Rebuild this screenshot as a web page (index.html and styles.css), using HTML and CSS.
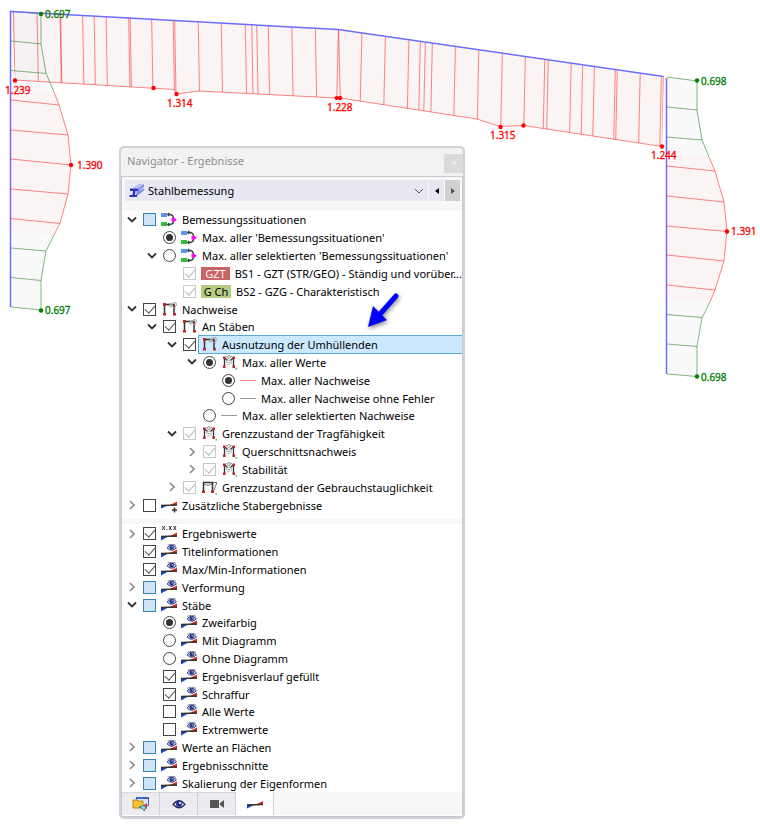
FILE: index.html
```html
<!DOCTYPE html>
<html lang="de">
<head>
<meta charset="utf-8">
<title>Navigator - Ergebnisse</title>
<link rel="stylesheet" href="styles.css">
</head>
<body>
<svg class="defs" aria-hidden="true">
  <symbol id="i-sit" viewBox="0 0 17 15">
    <path d="M6 2.500h3q3.500 .5 3.500 4M6 12.500h3q3.500-.5 3.500-3.500" fill="none" stroke="#444" stroke-width="1.500"/>
    <path d="M7 .5v4l3-2zM7 10.500v4l3-2z" fill="#444"/>
    <path d="M0 1h6v4H0z" fill="#5b93ee"/><path d="M0 10h6v4H0z" fill="#2fbd3a"/>
    <path d="M10.500 6h3l2.500 1.800-2.500 1.700h-3z" fill="#f0f"/>
  </symbol>
  <symbol id="i-frame" viewBox="0 0 17 15">
    <path d="M3.500 12V2.500h9.500V12" fill="none" stroke="#333" stroke-width="1.500"/>
    <g fill="none" stroke="#9aa1a6"><circle cx="10" cy="3.500" r="1.500"/><circle cx="13.500" cy="2.500" r="2"/><path d="M8 1l2 2M12 5l3 1"/></g>
    <path d="M2 1h3v3H2zM2 11h3v2.500H2zM12 11h3v2.500h-3zM12 3h2v2h-2z" fill="#c0272d"/>
  </symbol>
  <symbol id="i-gear" viewBox="0 0 17 15">
    <path d="M3.500 12V2.500M12.500 2.500V12M3.500 2.500l3 3M12.500 2.500l-3 3" fill="none" stroke="#333" stroke-width="1.300"/>
    <g fill="none" stroke="#9a9da0"><circle cx="8" cy="2" r="1.500"/><circle cx="8" cy="7.500" r="2.300" stroke-dasharray="2 1"/><path d="M7 7.500h2M5 1l1 1M10 2l1-1"/></g>
    <path d="M2 1.500h2.500V4H2zM11.500 1.500H14V4h-2.500zM2 10.500h2.500V13H2zM11.500 10.500H14V13h-2.500z" fill="#c0272d"/>
    <path d="M14.500 13H16v1.500h-1.500z" fill="#3fbf3f"/>
  </symbol>
  <symbol id="i-sag" viewBox="0 0 17 15">
    <path d="M2.500 12V2.500h9V12" fill="none" stroke="#333" stroke-width="1.500"/>
    <path d="M3 4q4 3 8 0M12 2.500h4L12.500 11" fill="none" stroke="#777"/>
    <path d="M1 10.500h3V13H1zM10 10.500h3V13h-3z" fill="#c0272d"/><path d="M14.500 13H16v1.500h-1.500z" fill="#3fbf3f"/>
  </symbol>
  <symbol id="i-mem" viewBox="0 0 17 15">
    <path d="M0 9h8L0 13.500z" fill="#1747c4"/><path d="M8 9.500L16 5.500v4.500H8z" fill="#e22a12"/>
    <path d="M0 9.500L16 9" stroke="#333" stroke-width="1.500"/>
  </symbol>
  <symbol id="i-eye" viewBox="0 0 17 15">
    <use href="#i-mem"/>
    <path d="M6 3.800q4.700-5 9.400 0-4.700 5-9.400 0z" fill="#cfd3ee" stroke="#33406e"/><circle cx="10.700" cy="3.500" r="2.200" fill="#27348f"/><circle cx="11.300" cy="2.800" r=".6" fill="#fff"/>
    <path d="M6.500 1.200q4.200-2 8.400 0" fill="none" stroke="#77809c"/>
  </symbol>
  <symbol id="i-plus" viewBox="0 0 17 15">
    <path d="M0 7h8L0 10.500z" fill="#1747c4"/><path d="M8 7.500L16 3.500v4z" fill="#e22a12"/>
    <path d="M0 7.500L16 7M11 12h5M13.500 9.500v5" stroke="#333" stroke-width="1.500"/>
  </symbol>
  <symbol id="i-xxx" viewBox="0 0 17 15">
    <use href="#i-mem" y="1"/>
    <path d="M1 0l3 4M4 0L1 4M8 0l2.500 4M10.500 0L8 4M12.500 0l2.500 4M15 0l-2.500 4" fill="none" stroke="#333"/><path d="M5.500 3h1v1h-1z" fill="#333"/>
  </symbol>
  <symbol id="i-red" viewBox="0 0 17 15"><path d="M0 7.500h16" stroke="#f88"/></symbol>
  <symbol id="i-grey" viewBox="0 0 17 15"><path d="M0 7.500h16" stroke="#999"/></symbol>
  <symbol id="i-open" viewBox="0 0 16 16"><path d="M4 5.500L8 9.500 12 5.500" fill="none" stroke="#333" stroke-width="1.800"/></symbol>
  <symbol id="i-shut" viewBox="0 0 16 16"><path d="M6 4l4 4-4 4" fill="none" stroke="#888" stroke-width="1.600"/></symbol>
</svg>

<main class="stage">
  <svg class="diagram" viewBox="0 0 760 824" role="img" aria-label="Ausnutzungsverlauf am Rahmen">
    <defs>
      <clipPath id="beam"><path d="M11 11L338 29.500 664 77 662 146.500 523.500 125.500 500 126.500 477 119 340 98 336 98 199 91 177 94 174 89.500 15 80z"/></clipPath>
    </defs>
    <g class="fill-bad">
      <path d="M11 88l43 4 5 13 9 30 3 30-3 29-8 29-6 12-43-4z"/>
      <path d="M667 154l42 3 6 14 9 31 3 29-3 30-9 29-5 12-43-4z"/>
      <path d="M11 11L338 29.500 664 77 662 146.500 523.500 125.500 500 126.500 477 119 340 98 336 98 199 91 177 94 174 89.500 15 80z"/>
    </g>
    <g class="fill-ok">
      <path d="M11 11l30 3v30l5 29 8 19-43-4zM11 231l43 4-8 16-5 29v30l-30-3z"/>
      <path d="M667 77l30 4v29l5 30 7 17-42-3zM667 298l43 4-8 15-5 29v30l-30-2z"/>
    </g>
    <g class="line bad">
      <path clip-path="url(#beam)" d="M13.500 10l2 110M37 10l2 110M60 10l2 110M60.500 10l2 110M82.500 10l2 110M94 10l2 110M106 10l2 110M128.500 10l2 110M130 10l2 110M151.500 10l2 110M173 10l2 110M174.500 10l2 110M198 10l2 110M221 10l2 110M245 10l2 110M251.500 10l2 110M256.500 10l2 110M268 10l2 110M291.500 10l2 110M315 10l2 110M338.500 28l-2 80M338.500 28l2 80M362 30l-2 80M385.500 30l-2 90M409 35l-2 90M420.500 35l-2 90M425.500 35l-2 90M432.500 35l-2 95M455.500 40l-2 95M479 40l-2 95M502.500 50l-2 85M525.500 50l-2 90M545 50l-2 90M548.500 50l-2 90M571.500 50l-2 90M583 50l-2 95M594.500 60l-2 90M615.500 60l-2 90M617.500 60l-2 90M640.500 60l-2 90M661.500 70l-2 90M663.500 70l-1.500 90"/>
      <path d="M15 80l159 9.500 3 4.500 22-3 137 7h4l137 21 23 7.500 23.500-1 138.500 21"/>
      <path d="M54 92l5 13 9 30 3 30-3 29-8 29-6 12M11 100l48 5M11 130l57 5M11 159l60 6M11 189l57 5M11 218.500l49 5"/>
      <path d="M709 157l6 14 9 31 3 29-3 30-9 29-5 12M667 166l48 5M667 196l57 6M667 226l60 5.500M667 255l57 6M667 285l48 5"/>
    </g>
    <g class="line ok">
      <path d="M11 11l30 3v30l5 29 8 19M54 235l-8 16-5 29v30l-30-3M11 41l30 3M11 70.500l35 3M11 248l35 3M11 277.500l30 3"/>
      <path d="M667 77l30 4v29l5 30 7 17M710 302l-8 16-5 28.500v30l-30-2.500M667 107l30 3M667 137l35 3M667 314.500l35 3M667 344l30 2.500"/>
    </g>
    <path class="axis" d="M10.500 307V11.500L338 29.500 663.500 76.500M666.500 78v296"/>
    <path class="axis-tint" d="M10.500 88v143M666.500 154v144"/>
    <g class="dot-bad"><circle cx="15" cy="80.500" r="2.200"/><circle cx="153.500" cy="88" r="2.200"/><circle cx="176.500" cy="94" r="2.200"/><circle cx="336.500" cy="98" r="2"/><circle cx="340" cy="98" r="2.200"/><circle cx="500.500" cy="127" r="2.200"/><circle cx="523.500" cy="125.500" r="2.200"/><circle cx="662" cy="146.500" r="2.200"/><circle cx="71" cy="165" r="2.200"/><circle cx="727" cy="231.500" r="2.200"/></g>
    <g class="dot-ok"><circle cx="41" cy="14" r="2.200"/><circle cx="41" cy="310.500" r="2.200"/><circle cx="697" cy="80.500" r="2.200"/><circle cx="697" cy="376.500" r="2.200"/></g>
    <g class="num num-bad"><text x="5" y="94">1.239</text><text x="167" y="107">1.314</text><text x="327" y="111">1.228</text><text x="490" y="139">1.315</text><text x="651" y="159">1.244</text><text x="77" y="169">1.390</text><text x="731" y="235">1.391</text></g>
    <g class="num num-ok"><text x="45" y="18">0.697</text><text x="45" y="314">0.697</text><text x="701" y="85">0.698</text><text x="701" y="381">0.698</text></g>
  </svg>

  <section class="panel" aria-label="Navigator">
    <header class="title"><span>Navigator - Ergebnisse</span><button class="close" aria-label="Schließen"><svg viewBox="0 0 8 8"><path d="M2 2l4 4M6 2l-4 4"/></svg></button></header>
    <div class="body">
      <div class="bar">
        <div class="combo">
          <svg class="beam-icon" viewBox="0 0 16 14"><path d="M3 4.500L10 0h5L9 4.500z" fill="#b6bdf4"/><path d="M9 4.500L15 0v3L9.500 7 15 4.500v2L7 13l.5-6z" fill="#8790e6"/><path d="M1 4.500h8V7H6.500L6 11h2v2H.5v-2h3L4 7H1z" fill="#2b35b8"/></svg>
          <select aria-label="Bemessung"><option>Stahlbemessung</option></select>
          <svg class="chev" viewBox="0 0 10 6"><path d="M1 1l4 4 4-4"/></svg>
        </div>
        <button class="step" aria-label="Zurück"><svg viewBox="0 0 6 8"><path d="M5 1v6L1 4z"/></svg></button>
        <button class="step next" aria-label="Weiter"><svg viewBox="0 0 6 8"><path d="M1 1v6l4-3z"/></svg></button>
      </div>
      <ul class="tree tree-top">
        <li class="row"><button class="exp" aria-label="Zuklappen"><svg><use href="#i-open"/></svg></button><label><input type="checkbox" class="part"><svg><use href="#i-sit"/></svg><span>Bemessungssituationen</span></label></li>
        <li class="row l1"><i class="exp"></i><label><input type="radio" name="s" checked><svg><use href="#i-sit"/></svg><span>Max. aller 'Bemessungssituationen'</span></label></li>
        <li class="row l1"><button class="exp" aria-label="Zuklappen"><svg><use href="#i-open"/></svg></button><label><input type="radio" name="s"><svg><use href="#i-sit"/></svg><span>Max. aller selektierten 'Bemessungssituationen'</span></label></li>
        <li class="row l2"><i class="exp"></i><label><input type="checkbox" checked disabled><b class="tag tag-red">GZT</b><span>BS1 - GZT (STR/GEO) - Ständig und vorüber...</span></label></li>
        <li class="row l2"><i class="exp"></i><label><input type="checkbox" checked disabled><b class="tag tag-green">G Ch</b><span>BS2 - GZG - Charakteristisch</span></label></li>
        <li class="row"><button class="exp" aria-label="Zuklappen"><svg><use href="#i-open"/></svg></button><label><input type="checkbox" checked><svg><use href="#i-frame"/></svg><span>Nachweise</span></label></li>
        <li class="row l1"><button class="exp" aria-label="Zuklappen"><svg><use href="#i-open"/></svg></button><label><input type="checkbox" checked><svg><use href="#i-frame"/></svg><span>An Stäben</span></label></li>
        <li class="row l2 selected"><button class="exp" aria-label="Zuklappen"><svg><use href="#i-open"/></svg></button><label><input type="checkbox" checked><svg><use href="#i-frame"/></svg><span>Ausnutzung der Umhüllenden</span></label></li>
        <li class="row l3"><button class="exp" aria-label="Zuklappen"><svg><use href="#i-open"/></svg></button><label><input type="radio" name="w" checked><svg><use href="#i-gear"/></svg><span>Max. aller Werte</span></label></li>
        <li class="row l4"><i class="exp"></i><label><input type="radio" name="n" checked><svg><use href="#i-red"/></svg><span>Max. aller Nachweise</span></label></li>
        <li class="row l4"><i class="exp"></i><label><input type="radio" name="n"><svg><use href="#i-grey"/></svg><span>Max. aller Nachweise ohne Fehler</span></label></li>
        <li class="row l3"><i class="exp"></i><label><input type="radio" name="w"><svg><use href="#i-grey"/></svg><span>Max. aller selektierten Nachweise</span></label></li>
        <li class="row l2"><button class="exp" aria-label="Zuklappen"><svg><use href="#i-open"/></svg></button><label><input type="checkbox" checked disabled><svg><use href="#i-gear"/></svg><span>Grenzzustand der Tragfähigkeit</span></label></li>
        <li class="row l3"><button class="exp" aria-label="Aufklappen"><svg><use href="#i-shut"/></svg></button><label><input type="checkbox" checked disabled><svg><use href="#i-gear"/></svg><span>Querschnittsnachweis</span></label></li>
        <li class="row l3"><button class="exp" aria-label="Aufklappen"><svg><use href="#i-shut"/></svg></button><label><input type="checkbox" checked disabled><svg><use href="#i-gear"/></svg><span>Stabilität</span></label></li>
        <li class="row l2"><button class="exp" aria-label="Aufklappen"><svg><use href="#i-shut"/></svg></button><label><input type="checkbox" checked disabled><svg><use href="#i-sag"/></svg><span>Grenzzustand der Gebrauchstauglichkeit</span></label></li>
        <li class="row"><button class="exp" aria-label="Aufklappen"><svg><use href="#i-shut"/></svg></button><label><input type="checkbox"><svg><use href="#i-plus"/></svg><span>Zusätzliche Stabergebnisse</span></label></li>
      </ul>
      <ul class="tree tree-bottom">
        <li class="row"><button class="exp" aria-label="Aufklappen"><svg><use href="#i-shut"/></svg></button><label><input type="checkbox" checked><svg><use href="#i-xxx"/></svg><span>Ergebniswerte</span></label></li>
        <li class="row"><i class="exp"></i><label><input type="checkbox" checked><svg><use href="#i-eye"/></svg><span>Titelinformationen</span></label></li>
        <li class="row"><i class="exp"></i><label><input type="checkbox" checked><svg><use href="#i-eye"/></svg><span>Max/Min-Informationen</span></label></li>
        <li class="row"><button class="exp" aria-label="Aufklappen"><svg><use href="#i-shut"/></svg></button><label><input type="checkbox" class="part"><svg><use href="#i-eye"/></svg><span>Verformung</span></label></li>
        <li class="row"><button class="exp" aria-label="Zuklappen"><svg><use href="#i-open"/></svg></button><label><input type="checkbox" class="part"><svg><use href="#i-eye"/></svg><span>Stäbe</span></label></li>
        <li class="row l1"><i class="exp"></i><label><input type="radio" name="d" checked><svg><use href="#i-eye"/></svg><span>Zweifarbig</span></label></li>
        <li class="row l1"><i class="exp"></i><label><input type="radio" name="d"><svg><use href="#i-eye"/></svg><span>Mit Diagramm</span></label></li>
        <li class="row l1"><i class="exp"></i><label><input type="radio" name="d"><svg><use href="#i-eye"/></svg><span>Ohne Diagramm</span></label></li>
        <li class="row l1"><i class="exp"></i><label><input type="checkbox" checked><svg><use href="#i-eye"/></svg><span>Ergebnisverlauf gefüllt</span></label></li>
        <li class="row l1"><i class="exp"></i><label><input type="checkbox" checked><svg><use href="#i-eye"/></svg><span>Schraffur</span></label></li>
        <li class="row l1"><i class="exp"></i><label><input type="checkbox"><svg><use href="#i-eye"/></svg><span>Alle Werte</span></label></li>
        <li class="row l1"><i class="exp"></i><label><input type="checkbox"><svg><use href="#i-eye"/></svg><span>Extremwerte</span></label></li>
        <li class="row"><button class="exp" aria-label="Aufklappen"><svg><use href="#i-shut"/></svg></button><label><input type="checkbox" class="part"><svg><use href="#i-eye"/></svg><span>Werte an Flächen</span></label></li>
        <li class="row"><button class="exp" aria-label="Aufklappen"><svg><use href="#i-shut"/></svg></button><label><input type="checkbox" class="part"><svg><use href="#i-eye"/></svg><span>Ergebnisschnitte</span></label></li>
        <li class="row"><button class="exp" aria-label="Aufklappen"><svg><use href="#i-shut"/></svg></button><label><input type="checkbox" class="part"><svg><use href="#i-eye"/></svg><span>Skalierung der Eigenformen</span></label></li>
      </ul>
      <nav class="tabs">
        <button aria-label="Daten"><svg viewBox="0 0 18 16"><path d="M4.500 1.500h12v8h-12z" fill="#dce6fa" stroke="#3565c9"/><path d="M4 1h13v2H4z" fill="#3565c9"/><path d="M1 4h4l1 1h5v7H1z" fill="#f6c52c" stroke="#b98412"/><path d="M10 10l5-3v6z" fill="#e8401c"/><path d="M7 11q4-3 7 0l-2 4-2-3z" fill="#9ad8f2" stroke="#3a7fae"/></svg></button>
        <button aria-label="Anzeige"><svg viewBox="0 0 18 16"><path d="M3 8.500q6-7.500 12 0-6 6.500-12 0z" fill="#e4e6f6" stroke="#2c3665" stroke-width="1.300"/><circle cx="9" cy="8" r="3" fill="#27348f"/><circle cx="10" cy="7" r="1" fill="#fff"/></svg></button>
        <button aria-label="Ansichten"><svg viewBox="0 0 18 16"><path d="M2 4h9v8H2zM12 7l4-3v8l-4-3z" fill="#555"/></svg></button>
        <button class="active" aria-label="Ergebnisse"><svg viewBox="0 0 18 16"><path d="M1 8.500h8l-8 4z" fill="#1747c4"/><path d="M9 9l8-4v4z" fill="#e22a12"/><path d="M1 9L17 8.500" stroke="#333" stroke-width="1.500"/></svg></button>
      </nav>
    </div>
  </section>

  <svg class="pointer" viewBox="0 0 40 44" aria-hidden="true"><path d="M32 6L17 23" stroke-width="5" stroke-linecap="round"/><path d="M4 37L9 16l4 4 6 6 4 4z" class="head"/></svg>
</main>
</body>
</html>
```
FILE: styles.css
```css
* { box-sizing: border-box; }

body {
  margin: 0;
  background: #fff;
  color: #000;
  font: 11px/16px "Noto Sans", "Open Sans", sans-serif;
}

button, input, select {
  appearance: none;
  margin: 0;
  padding: 0;
  border: 0;
  border-radius: 0;
  background: none;
  font: inherit;
  color: inherit;
}

.defs { position: absolute; width: 0; height: 0; }

.stage {
  position: relative;
  display: grid;
  justify-items: start;
  align-items: start;
}

/* Result diagram behind the navigator window */
.diagram { grid-area: 1 / 1; display: block; width: 100%; }
.fill-ok { fill: #f0f0f0; fill-opacity: .4; }
.fill-bad { fill: #fbf4f4; }
.line { fill: none; stroke-width: 1; }
.line.bad { stroke: #ff2020; stroke-opacity: .55; }
.line.ok { stroke: #2e862e; stroke-opacity: .6; }
.axis { fill: none; stroke: #6c6cff; stroke-width: 1.5; }
.axis-tint { stroke: #b050d0; stroke-opacity: .5; }
.dot-bad { fill: #f00; }
.dot-ok { fill: #008000; }
.num { font-size: 10px; stroke-width: .3; }
.num-bad { fill: #f00; stroke: #f00; }
.num-ok { fill: #008000; stroke: #008000; }

/* Floating navigator window */
.panel {
  grid-area: 1 / 1;
  width: 346px;
  margin: 146px 0 5px 119px;
  position: relative;
  border: 2px solid #d2d2d6;
  border-radius: 5px;
  background: #f2f2f2;
}

.title {
  display: flex;
  align-items: center;
  justify-content: space-between;
  height: 28px;
  padding: 0 0 2px 6px;
  color: #8f8f8f;
}

.close {
  display: grid;
  place-items: center;
  width: 19px;
  height: 19px;
  margin-top: 4px;
  background: #dadada;
}
.close svg { width: 8px; height: 8px; stroke: #f4f4f4; fill: none; }

.body {
  border: 1px solid #c8c8d2;
  background: #f7f7f7;
}

.bar { display: flex; height: 34px; padding: 3px 2px 10px 3px; gap: 1px; }

.combo {
  flex: 1;
  display: flex;
  align-items: center;
  gap: 3px;
  padding: 0 4px;
  background: #e8e8f2;
}
.combo select { flex: 1; height: 21px; }
.beam-icon { width: 16px; height: 14px; }
.chev { width: 10px; height: 6px; fill: none; stroke: #555; }

.step { display: grid; place-items: center; width: 15px; background: #e8e8f2; }
.step svg { width: 6px; height: 8px; }
.step.next { background: #d0d0d0; fill: #555; }

.tree {
  display: grid;
  grid-auto-rows: minmax(0, 1fr);
  margin: 0;
  padding: 0 0 0 2px;
  list-style: none;
  background: #fff;
}
.tree-top { height: 308px; padding-bottom: 5px; }
.tree-bottom { height: 268px; margin-top: 5px; padding-top: 1px; }

.row { display: flex; align-items: center; gap: 3px; min-width: 0; }
.row.l1 { padding-left: 20px; }
.row.l2 { padding-left: 40px; }
.row.l3 { padding-left: 60px; }
.row.l4 { padding-left: 79px; }

.exp { flex: none; width: 16px; height: 16px; }
.exp svg { display: block; width: 16px; height: 16px; }

.row label { flex: 1; display: flex; align-items: center; min-width: 0; white-space: nowrap; }
.row label svg { flex: none; width: 17px; height: 15px; margin: 0 4px 0 5px; }
.row label span { line-height: 16px; padding-top: 1px; }

.selected label { position: relative; z-index: 0; }
.selected label::before {
  content: "";
  position: absolute;
  z-index: -1;
  inset: -1px 0 -1px 15px;
  border: 1px solid #5aa7dc;
  border-right: 0;
  background: #cce8ff;
}

.row input {
  flex: none;
  display: grid;
  place-items: center;
  width: 13px;
  height: 13px;
  border: 1px solid #444;
  background: #fff;
}
.row input[type="checkbox"]:checked::before {
  content: "";
  width: 9px;
  height: 5px;
  margin-top: -3px;
  border: solid #555;
  border-width: 0 0 1px 1px;
  transform: rotate(-48deg);
}
.row input:disabled { border-color: #c8c8c8; }
.row input[type="checkbox"]:disabled::before { border-color: #b8b8b8; }
.row input.part { border-color: #3c7fb1; background: #cce4f7; }
.row input[type="radio"] { border-radius: 50%; }
.row input[type="radio"]:checked::before {
  content: "";
  width: 7px;
  height: 7px;
  border-radius: 50%;
  background: #333;
}

.tag {
  width: 30px;
  height: 13px;
  margin: 0 5px;
  font-weight: 400;
  line-height: 13px;
  text-align: center;
}
.tag-red { background: #c96464; color: #fff; }
.tag-green { background: #b3cc82; }

.tabs { display: flex; height: 24px; border-bottom: 1px solid #fff; }
.tabs button {
  display: grid;
  place-items: center;
  width: 38px;
  border-right: 1px solid #d0d0d4;
  border-top: 1px solid #d8d8dc;
  background: #ececf0;
}
.tabs svg { width: 18px; height: 16px; }
.tabs .active { background: #fff; border-top-color: #fff; }

/* Callout arrow lying over the tree */
.pointer {
  position: absolute;
  left: 364px;
  top: 290px;
  width: 40px;
  height: 44px;
  stroke: #00f;
  filter: drop-shadow(1px 2px 2px rgba(0, 0, 0, .45));
}
.pointer .head { fill: #00f; stroke: none; }
```
